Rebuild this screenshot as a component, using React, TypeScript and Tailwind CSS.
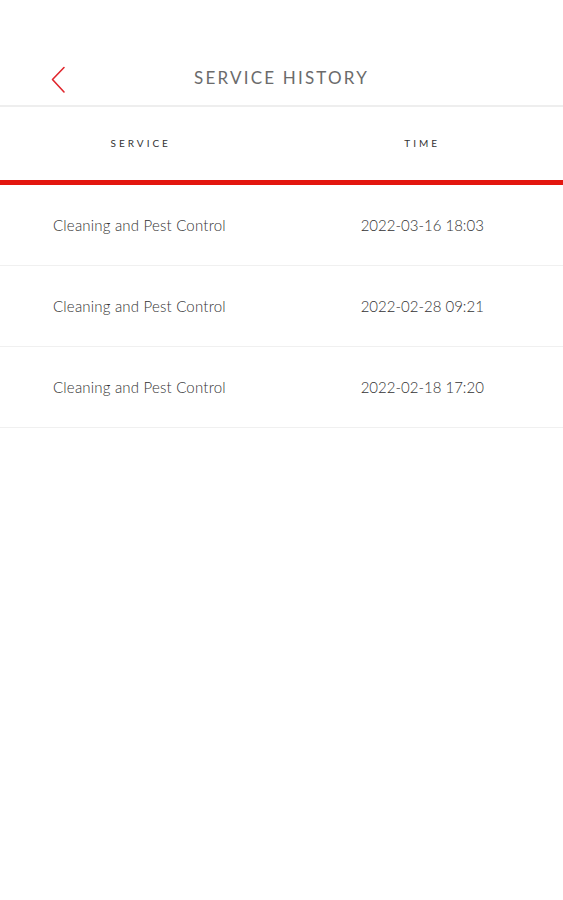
import React from "react";

const rows = [
  { service: "Cleaning and Pest Control", time: "2022-03-16 18:03" },
  { service: "Cleaning and Pest Control", time: "2022-02-28 09:21" },
  { service: "Cleaning and Pest Control", time: "2022-02-18 17:20" },
];

export default function App() {
  return (
    <div className="w-[563px] h-[900px] bg-white" style={{ fontFamily: "Lato, 'Open Sans', sans-serif" }}>
      <div className="relative h-[107px] pt-[50px] flex items-center justify-center border-b-[2px] border-[#eeeeee]">
        <svg className="absolute left-[50px] top-[66px]" width="16" height="28" viewBox="0 0 16 28" fill="none">
          <path d="M14 1.5 L2.5 13.5 L14 26" stroke="#e0262d" strokeWidth="1.6" strokeLinecap="round" strokeLinejoin="round" />
        </svg>
        <span className="text-[17px] tracking-[2.2px] text-[#6b6b6b]">SERVICE HISTORY</span>
      </div>
      <div className="grid grid-cols-2 h-[73px] items-center text-[10px] tracking-[3px] text-[#333]">
        <div className="text-center">SERVICE</div>
        <div className="text-center">TIME</div>
      </div>
      <div className="h-[5px] bg-[#e3160f]" />
      {rows.map((r, i) => (
        <div key={i} className="grid grid-cols-2 h-[81px] items-center border-b border-[#f0f0f0] text-[15px] font-light text-[#333]">
          <div className="pl-[53px] tracking-[0.2px]">{r.service}</div>
          <div className="text-center">{r.time}</div>
        </div>
      ))}
    </div>
  );
}
